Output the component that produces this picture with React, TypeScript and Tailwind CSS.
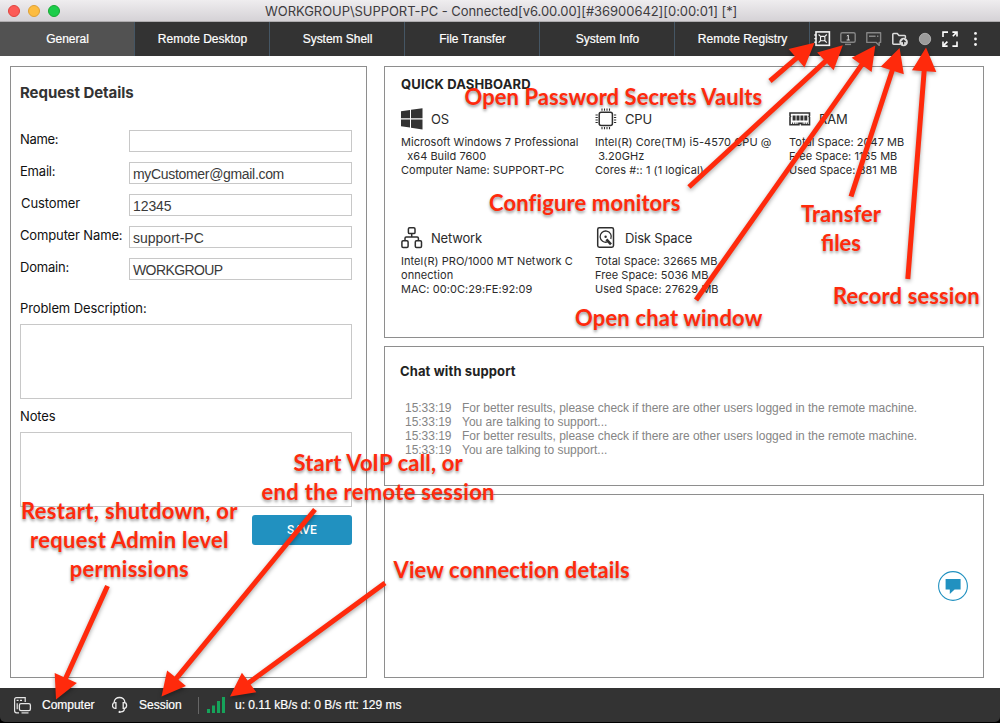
import React from 'react';

const TABS = [
  { name: 'General', tracking: '' },
  { name: 'Remote Desktop', tracking: '' },
  { name: 'System Shell', tracking: 'tracking-[-0.04px]' },
  { name: 'File Transfer', tracking: '' },
  { name: 'System Info', tracking: '' },
  { name: 'Remote Registry', tracking: '' },
];

const FIELDS = [
  { label: 'Name:', value: '', tracking: '', labelTracking: 'tracking-[-0.3px]' },
  { label: 'Email:', value: 'myCustomer@gmail.com', tracking: 'tracking-[-0.32px]', labelTracking: 'tracking-[-0.2px]' },
  { label: 'Customer', value: '12345', tracking: 'tracking-[-0.08px]', labelTracking: 'tracking-[-0.1px] pl-px' },
  { label: 'Computer Name:', value: 'support-PC', tracking: '', labelTracking: 'tracking-[-0.14px]' },
  { label: 'Domain:', value: 'WORKGROUP', tracking: 'tracking-[-0.6px]', labelTracking: 'tracking-[-0.2px]' },
];

const MESSAGES = [
  'For better results, please check if there are other users logged in the remote machine.',
  'You are talking to support...',
  'For better results, please check if there are other users logged in the remote machine.',
  'You are talking to support...',
];

function TitleBar() {
  return (
    <div className="flex h-[22px] items-center border-b border-[#aeacae] bg-linear-to-b from-[#efedef] to-[#d5d2d6]">
      <div className="flex w-[265px] gap-2 pl-2">
        <span className="size-3 rounded-full border border-[#e0443e] bg-[#fc5b57]" />
        <span className="size-3 rounded-full border border-[#dea035] bg-[#fdbc40]" />
        <span className="size-3 rounded-full border border-[#17a833] bg-[#1ccd4a]" />
      </div>
      <div className="text-[13px] leading-[22px] tracking-[-0.055px] text-[#3d3b3e]">
        WORKGROUP\SUPPORT-PC - Connected[v6.00.00][#36900642][0:00:01] [*]
      </div>
    </div>
  );
}

function Toolbar() {
  return (
    <div className="flex h-[34px]">
      <svg className="h-[34px] w-[26px]" viewBox="810 22 26 34" fill="none" stroke="#f2f2f2">
        <rect x="816" y="31.9" width="13.4" height="13.4" strokeWidth="1.6" />
        <path d="M814.3 35h2M814.3 38.6h2M814.3 42.2h2" strokeWidth="1.4" />
        <path d="M818.6 34.5l2.2 2.2M826.8 34.5l-2.2 2.2M818.6 42.7l2.2-2.2M826.8 42.7l-2.2-2.2" strokeWidth="1.1" />
        <rect x="820.5" y="36.4" width="4.4" height="4.4" rx="1" strokeWidth="1.1" />
      </svg>
      <svg className="h-[34px] w-[26px]" viewBox="836 22 26 34" fill="none" stroke="#858585">
        <rect x="840.8" y="32.7" width="14.4" height="9.6" rx="1.5" strokeWidth="1.4" />
        <path d="M845 44.4h6" strokeWidth="1.4" />
        <path d="M846.8 36l1.5-.8v4.8M846.6 40h3.2" stroke="#d8d8d8" strokeWidth="1" />
      </svg>
      <svg className="h-[34px] w-[26px]" viewBox="862 22 26 34" fill="none" stroke="#858585" strokeWidth="1.4">
        <path d="M866.8 32.8h13.8v9.6h-1.4v3l-3-3h-9.4z" strokeLinejoin="round" />
        <path d="M869 36.2h6.6M877 36.2h1.4" />
      </svg>
      <svg className="h-[34px] w-[26px]" viewBox="888 22 26 34" fill="none" stroke="#dcdcdc">
        <path d="M900.2 44.3h-6.6a.8.8 0 0 1-.8-.8v-9.2a.8.8 0 0 1 .8-.8h3.6l1.8 2h5.6a.8.8 0 0 1 .8.8v2" strokeWidth="1.5" />
        <circle cx="903.6" cy="42" r="4.3" fill="#dcdcdc" stroke="none" />
        <path d="M903.6 44.6v-4.4M901.6 42l2-2 2 2" stroke="#333" strokeWidth="1.2" />
      </svg>
      <svg className="h-[34px] w-[26px]" viewBox="914 22 26 34">
        <circle cx="925" cy="39" r="5.7" fill="#9b9b9b" stroke="#bdbdbd" strokeWidth="0.8" />
      </svg>
      <svg className="h-[34px] w-[26px]" viewBox="940 22 26 34" fill="none" stroke="#fff" strokeWidth="1.6">
        <path d="M943 37v-4.9h5M943 41.5v4.6h4.6M957 41.5v4.6h-4.6M957 36.6v-4.5h-4.6" />
        <path d="M952.8 36.2l3.8-3.8M947.4 41.6l-3.8 3.8" />
      </svg>
      <svg className="h-[34px] w-[26px]" viewBox="966 22 26 34" fill="#f5f5f5">
        <circle cx="975.5" cy="33.4" r="1.4" />
        <circle cx="975.5" cy="39" r="1.4" />
        <circle cx="975.5" cy="44.5" r="1.4" />
      </svg>
    </div>
  );
}

function NavBar() {
  return (
    <div className="flex h-[34px] bg-[#333]">
      {TABS.map((tab, i) => (
        <div
          key={tab.name}
          className={`w-[135px] border-r border-[#455664] pl-px text-center font-['Liberation_Sans',sans-serif] text-xs leading-[34px] text-white [-webkit-text-stroke:0.2px_white] ${tab.tracking} ${i === 0 ? 'bg-[#525252]' : ''}`}
        >
          {tab.name}
        </div>
      ))}
      <Toolbar />
    </div>
  );
}

function RequestDetails() {
  return (
    <section className="flex h-[612px] w-[357px] flex-col border border-[#8e8e8e] pl-[9px]">
      <h2 className="mt-[16px] h-5 text-[15px] leading-5 font-bold tracking-[-0.05px] text-[#333]">Request Details</h2>
      <div className="mt-[27px] flex flex-col gap-2.5">
        {FIELDS.map((f) => (
          <label key={f.label} className="flex h-[22px]">
            <span className={`w-[109px] text-[13px] leading-[19px] whitespace-nowrap text-[#111] ${f.labelTracking}`}>{f.label}</span>
            <span className={`h-[22px] w-[223px] border border-[#c8c8c8] pl-[3px] font-['Liberation_Sans',sans-serif] text-sm leading-[22px] text-[#3a3a3a] ${f.tracking}`}>
              {f.value}
            </span>
          </label>
        ))}
      </div>
      <div className="mt-[19px] h-[18px] text-[13px] leading-[18px] tracking-[-0.1px] text-[#111]">Problem Description:</div>
      <div className="mt-[7px] h-[75px] w-[332px] border border-[#c8c8c8]" />
      <div className="mt-[8px] h-[18px] text-[13px] leading-[18px] tracking-[-0.13px] text-[#111]">Notes</div>
      <div className="mt-[7px] h-[75px] w-[332px] border border-[#c8c8c8]" />
      <button className="mt-2 ml-[232px] h-[30px] w-[100px] rounded-[3px] bg-[#2191c0] font-[Roboto,sans-serif] text-xs leading-[30px] font-medium tracking-[0.15px] text-white">
        SAVE
      </button>
    </section>
  );
}

function Stat({ icon, title, lines, tracking = '' }: { icon: React.ReactNode; title: string; lines: string[]; tracking?: string }) {
  return (
    <div className="w-[194px]">
      <div className="flex h-[22px] items-center gap-[8px]">
        {icon}
        <span className="text-[13px] leading-[22px] tracking-[-0.18px] text-[#2b2b2b]">{title}</span>
      </div>
      <div className={`mt-[5px] text-[11px] leading-[14px] whitespace-pre text-[#2b2b2b] ${tracking}`}>{lines.join('\n')}</div>
    </div>
  );
}

const iconClass = 'size-[22px] shrink-0';

const OsIcon = () => (
  <svg className={iconClass} viewBox="0 0 22 22" fill="#333">
    <path d="M0 3.3l9-1.3v8.2H0zM10 1.8L21.5.2v10H10zM0 11.4h9v8.2l-9-1.3zM10 11.4h11.5v10L10 19.8z" />
  </svg>
);

const CpuIcon = () => (
  <svg className={iconClass} viewBox="0 0 22 22" fill="none" stroke="#2e2e2e">
    <rect x="4.2" y="4.2" width="13.2" height="13.2" rx="2" strokeWidth="1.5" />
    <path d="M7 .5v2.3M9.5 .5v2.3M12 .5v2.3M14.5 .5v2.3M7 18.9v2.3M9.5 18.9v2.3M12 18.9v2.3M14.5 18.9v2.3M.5 7h2.3M.5 9.5h2.3M.5 12h2.3M.5 14.5h2.3M18.9 7h2.3M18.9 9.5h2.3M18.9 12h2.3M18.9 14.5h2.3" strokeWidth="1.1" />
  </svg>
);

const RamIcon = () => (
  <svg className={iconClass} viewBox="0 0 22 22" fill="none" stroke="#333">
    <path d="M1 5h19.5v2.6l-.5.8.5.8v7.6h-7.8v-1.4H9.9v1.4H1V9.200l.5-.8-.5-.8z" strokeWidth="1.6" />
    <path d="M3.6 7.400h3v5h-3zM7.500 7.400h3v5h-3zM11.400 7.400h3v5h-3zM15.300 7.400h3v5h-3z" fill="#333" stroke="none" />
    <path d="M3.600 16.500v-2M5.800 16.500v-2M8 16.500v-2M14 16.500v-2M16.200 16.500v-2M18.300 16.500v-2" strokeWidth="1" />
  </svg>
);

const NetworkIcon = () => (
  <svg className={iconClass} viewBox="0 0 22 22" fill="none" stroke="#2e2e2e" strokeWidth="1.5">
    <rect x="7.4" y=".8" width="6.6" height="5.8" rx="1.2" />
    <rect x=".9" y="13.8" width="6.2" height="6.6" rx="1.2" />
    <rect x="14.3" y="13.8" width="6.2" height="6.6" rx="1.2" />
    <path d="M10.7 6.6v3.400M4 13.8v-2.6A1.2 1.2 0 0 1 5.2 10h11a1.2 1.2 0 0 1 1.2 1.2v2.6" />
  </svg>
);

const DiskIcon = () => (
  <svg className={iconClass} viewBox="0 0 22 22" fill="none" stroke="#2e2e2e">
    <rect x="2.7" y=".8" width="15.8" height="19.400" rx="1.6" strokeWidth="1.5" />
    <path d="M12.5 14.9a5.6 5.6 0 1 1 3.3-3" strokeWidth="1.3" />
    <circle cx="10.6" cy="9.7" r="1.2" fill="#2e2e2e" stroke="none" />
    <path d="M11.4 12.4l4.6 5" strokeWidth="2.6" />
  </svg>
);

function Dashboard() {
  return (
    <section className="h-[272px] border border-[#8e8e8e] pl-4">
      <h3 className="mt-[9px] h-4 text-[13px] leading-4 font-bold tracking-[0.14px] text-[#222]">QUICK DASHBOARD</h3>
      <div className="mt-4 flex h-[119px]">
        <Stat icon={<OsIcon />} title="OS" lines={['Microsoft Windows 7 Professional', '  x64 Build 7600', 'Computer Name: SUPPORT-PC']} tracking="tracking-[0.03px]" />
        <Stat icon={<CpuIcon />} title="CPU" lines={['Intel(R) Core(TM) i5-4570 CPU @', ' 3.20GHz', 'Cores #:: 1 (1 logical)']} tracking="tracking-[0.06px]" />
        <Stat icon={<RamIcon />} title="RAM" lines={['Total Space: 2047 MB', 'Free Space: 1165 MB', 'Used Space: 881 MB']} tracking="tracking-[0.03px]" />
      </div>
      <div className="flex">
        <Stat icon={<NetworkIcon />} title="Network" lines={['Intel(R) PRO/1000 MT Network C', 'onnection', 'MAC: 00:0C:29:FE:92:09']} tracking="tracking-[0.06px]" />
        <Stat icon={<DiskIcon />} title="Disk Space" lines={['Total Space: 32665 MB', 'Free Space: 5036 MB', 'Used Space: 27629 MB']} tracking="tracking-[0.05px]" />
      </div>
    </section>
  );
}

function Chat() {
  return (
    <section className="h-[140px] border border-[#8e8e8e] pl-[15px]">
      <h3 className="mt-[16px] h-4 text-[13px] leading-4 font-bold tracking-[0.12px] text-[#222]">Chat with support</h3>
      <div className="mt-[22px] pl-[5px] font-['Liberation_Sans',sans-serif] text-xs leading-[14px] text-[#858585]">
        {MESSAGES.map((m, i) => (
          <div key={i} className="flex">
            <span className="w-[57px] tracking-[-0.03px]">15:33:19</span>
            <span className="tracking-[-0.012px]">{m}</span>
          </div>
        ))}
      </div>
    </section>
  );
}

function MessageBox() {
  return (
    <section className="flex h-[184px] items-center justify-end border border-[#8e8e8e] pr-[15px]">
      <svg className="size-[30px]" viewBox="0 0 30 30">
        <circle cx="15" cy="15" r="14.4" fill="#fff" stroke="#2191c0" strokeWidth="1.1" />
        <path d="M7.6 8h15v10.4h-6L11.8 23v-4.6H7.6z" fill="#2191c0" />
      </svg>
    </section>
  );
}

function StatusBar() {
  return (
    <div className="bg-black">
      <footer className="flex h-[34px] items-center rounded-b-[5px] bg-[#333] font-['Liberation_Sans',sans-serif] text-xs text-white [-webkit-text-stroke:0.2px_white]">
        <svg className="ml-[13px] h-[34px] w-[29px]" viewBox="13 688 29 34" fill="none" stroke="#e6e6e6">
          <path d="M19 712.8h-2.400a2 2 0 0 1-2-2v-11.1a2 2 0 0 1 2-2h8.6v4.2M16.600 700.400h2M20 700.400h2M17.200 703.200v6" strokeWidth="1.2" />
          <rect x="19.4" y="703.700" width="11" height="7" rx="1.6" strokeWidth="1.3" />
          <path d="M21.5 712.9h7" strokeWidth="1.2" />
        </svg>
        <span className="w-[70px] tracking-[-0.02px]">Computer</span>
        <svg className="h-[34px] w-[27px]" viewBox="112 688 27 34" fill="none" stroke="#ececec" strokeWidth="1.3">
          <path d="M114.2 702.6v-.7a5.3 4.4 0 0 1 10.6 0v.7" />
          <path d="M115.9 702.7v5.6h-1a2.4 2.8 0 0 1 0-5.6zM123.2 702.7v5.6h1a2.4 2.8 0 0 0 0-5.6z" />
          <path d="M124.4 708.5c0 2.6-1.6 3.4-3.6 3.4" />
          <circle cx="119.7" cy="711.9" r="1.2" fill="#ececec" stroke="none" />
        </svg>
        <span className="w-[59px]">Session</span>
        <span className="h-[17px] w-px bg-[#666]" />
        <svg className="ml-2 h-[34px] w-[28px]" viewBox="207 688 28 34" fill="#16a35a">
          <path d="M207 709h3v4h-3zM212 705.5h3v7.5h-3zM217 701h3v12h-3zM222 697h3v16h-3z" />
        </svg>
        <span>u: 0.11 kB/s d: 0 B/s rtt: 129 ms</span>
      </footer>
    </div>
  );
}

const ARROWS: [number, number, number, number][] = [
  [770, 81, 814.5, 42.7],
  [689, 187, 842.8, 45.3],
  [696, 300, 875.3, 45.5],
  [851, 196.5, 899.6, 48],
  [907.8, 279, 926, 47.5],
  [107.5, 586, 56, 699.5],
  [315, 509.5, 161.5, 696.5],
  [385, 583, 230, 696.5],
];

function arrowPoints([x1, y1, x2, y2]: [number, number, number, number]) {
  const d = Math.hypot(x2 - x1, y2 - y1);
  const ux = (x2 - x1) / d;
  const uy = (y2 - y1) / d;
  const at = (along: number, side: number) =>
    `${(x1 + ux * along - uy * side).toFixed(2)},${(y1 + uy * along + ux * side).toFixed(2)}`;
  const neck = d - 23.7;
  return [at(0, -2.5), at(neck, -2.5), at(neck, -12.2), at(d, 0), at(neck, 12.2), at(neck, 2.5), at(0, 2.5)].join(' ');
}

const CALLOUTS = [
  { place: 'left-[464.5px] top-[82px]', lines: [{ text: 'Open Password Secrets Vaults', tracking: 'tracking-[0.06px]' }] },
  { place: 'left-[489px] top-[188px]', lines: [{ text: 'Configure monitors', tracking: 'tracking-[0.12px]' }] },
  { place: 'left-[575px] top-[303px]', lines: [{ text: 'Open chat window', tracking: 'tracking-[0.16px]' }] },
  { place: 'left-[801px] top-[199px]', lines: [{ text: 'Transfer', tracking: 'tracking-[0.02px]' }, { text: 'files', tracking: '' }] },
  { place: 'left-[833px] top-[281px]', lines: [{ text: 'Record session', tracking: 'tracking-[0.1px]' }] },
  { place: 'left-[261.5px] top-[448px]', lines: [{ text: 'Start VoIP call, or', tracking: 'tracking-[0.14px]' }, { text: 'end the remote session', tracking: 'tracking-[0.3px]' }] },
  { place: 'left-[21px] top-[496px]', lines: [{ text: 'Restart, shutdown, or', tracking: 'tracking-[0.32px]' }, { text: 'request Admin level', tracking: 'tracking-[0.27px]' }, { text: 'permissions', tracking: 'tracking-[0.3px]' }] },
  { place: 'left-[393.5px] top-[555px]', lines: [{ text: 'View connection details', tracking: 'tracking-[0.12px]' }] },
];

function Annotations() {
  return (
    <div className="pointer-events-none absolute inset-0">
      <svg className="absolute inset-0 h-[723px] w-[1000px] drop-shadow-[0_2px_2px_rgba(0,0,0,0.35)]" viewBox="0 0 1000 723" fill="#ff2a0c">
        {ARROWS.map((a) => (
          <polygon key={a.join()} points={arrowPoints(a)} />
        ))}
      </svg>
      {CALLOUTS.map((c) => (
        <div
          key={c.lines[0].text}
          className={`absolute text-center font-[Lato,sans-serif] text-[22px] leading-[29px] font-bold whitespace-nowrap text-[#ff2a0c] [text-shadow:0_2px_3px_rgba(0,0,0,0.4)] ${c.place}`}
        >
          {c.lines.map((l) => (
            <div key={l.text} className={l.tracking}>{l.text}</div>
          ))}
        </div>
      ))}
    </div>
  );
}

export default function App() {
  return (
    <div className="relative h-[723px] w-[1000px] overflow-hidden bg-black font-[Inter,sans-serif]">
      <TitleBar />
      <NavBar />
      <main className="flex h-[632px] gap-[17px] bg-white pt-2.5 pl-2.5">
        <RequestDetails />
        <div className="flex w-[600px] flex-col gap-2">
          <Dashboard />
          <Chat />
          <MessageBox />
        </div>
      </main>
      <StatusBar />
      <Annotations />
    </div>
  );
}
